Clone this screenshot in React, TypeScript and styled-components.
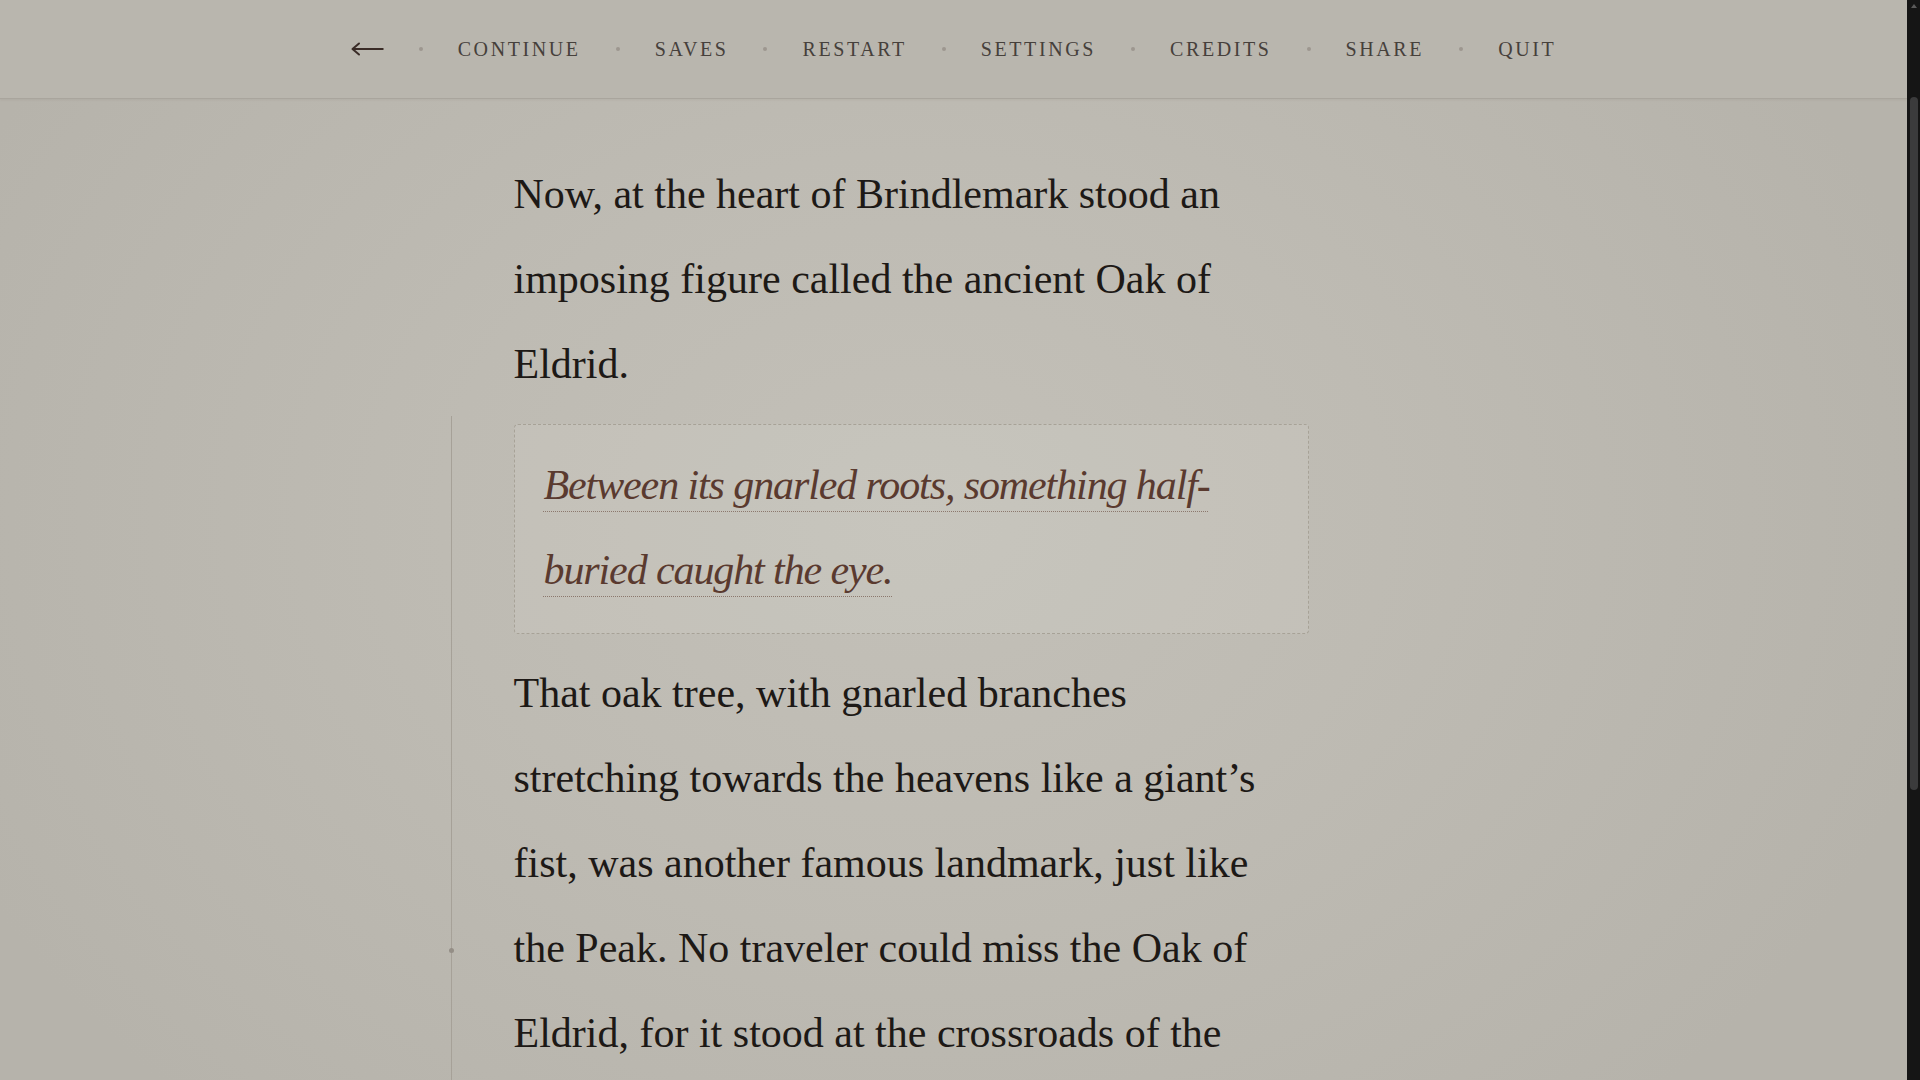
import React, { FunctionComponent } from 'react';
import styled, { createGlobalStyle } from 'styled-components';

const GlobalStyle = createGlobalStyle`
  html, body {
    margin: 0;
    padding: 0;
    height: 100%;
    overflow: hidden;
    background: #b9b6ae;
  }
  * {
    box-sizing: border-box;
  }
`;

const serif = `"Liberation Serif", "Times New Roman", serif`;

const Page = styled.div`
  display: flex;
  width: 100vw;
  height: 100vh;
  overflow: hidden;
`;

const Main = styled.main`
  flex: 1;
  display: grid;
  grid-template-columns: 1fr 880px 1fr;
  grid-template-rows: 99px 1fr;
  overflow: hidden;
  background: radial-gradient(
    ellipse 55% 75% at 48% 48%,
    #c3c0b8 0%,
    #bebbb3 45%,
    #b6b3ab 100%
  );
`;

const NavBar = styled.nav`
  grid-column: 1 / -1;
  display: flex;
  align-items: center;
  justify-content: center;
  gap: 35px;
  height: 99px;
  background: #b9b6ae;
  border-bottom: 1px solid #a9a59d;
  box-shadow: 0 1px 2px rgba(90, 80, 70, 0.08);
`;

const BackButton = styled.button`
  display: flex;
  align-items: center;
  background: none;
  border: none;
  padding: 0;
  cursor: pointer;
  color: #3a2c27;
`;

const NavDot = styled.span`
  width: 4px;
  height: 4px;
  border-radius: 50%;
  background: #9d978f;
`;

const NavItem = styled.a`
  font-family: ${serif};
  font-size: 20px;
  letter-spacing: 2.6px;
  text-transform: uppercase;
  color: #46403b;
  text-decoration: none;
  cursor: pointer;
  line-height: 1;
`;

const Gutter = styled.div`
  grid-column: 1;
  grid-row: 2;
  display: flex;
  justify-content: flex-end;
  padding-right: 62px;
  padding-top: 317px;
`;

const Rail = styled.div`
  width: 1px;
  height: 100%;
  background: #a6a198;
  display: flex;
  flex-direction: column;
  align-items: center;
`;

const RailDot = styled.span<{ offset: number }>`
  flex: none;
  width: 5px;
  height: 5px;
  border-radius: 50%;
  background: #948e86;
  margin-top: ${({ offset }) => offset}px;
`;

const Story = styled.article`
  grid-column: 2;
  grid-row: 2;
  padding-top: 53px;
  display: flex;
  flex-direction: column;
  gap: 17px;
`;

const Paragraph = styled.p`
  margin: 0;
  max-width: 770px;
  font-family: ${serif};
  font-size: 42px;
  line-height: 85px;
  color: #1d1916;
`;

const ChoiceBox = styled.div`
  width: 795px;
  padding: 18px 28px 20px 29px;
  border: 1px dashed #a7a297;
  border-radius: 4px;
  background: rgba(255, 255, 255, 0.08);
`;

const ChoiceText = styled.a`
  font-family: ${serif};
  font-style: italic;
  font-size: 42px;
  line-height: 85px;
  letter-spacing: -1.1px;
  color: #5a3a2f;
  text-decoration: underline dotted #8c786d;
  text-decoration-thickness: 1px;
  text-underline-offset: 12px;
  cursor: pointer;
`;

const ScrollRail = styled.div`
  flex: none;
  width: 13px;
  height: 100%;
  background: #151515;
  display: flex;
  flex-direction: column;
  align-items: center;
`;

const ScrollArrow = styled.span`
  margin-top: 4px;
  width: 0;
  height: 0;
  border-left: 3px solid transparent;
  border-right: 3px solid transparent;
  border-bottom: 4px solid #5a5a5a;
`;

const ScrollThumb = styled.div`
  margin-top: 89px;
  width: 8px;
  height: 693px;
  border-radius: 4px;
  background: #3b3b3c;
`;

const BackArrow: FunctionComponent = () => (
  <svg width="33" height="14" viewBox="0 0 33 14" fill="none">
    <path d="M1.5 7H32.5" stroke="currentColor" strokeWidth="2" />
    <path
      d="M8 1.5L1.5 7L8 12.5"
      stroke="currentColor"
      strokeWidth="2"
      strokeLinecap="round"
      strokeLinejoin="round"
    />
  </svg>
);

const menu = ['Continue', 'Saves', 'Restart', 'Settings', 'Credits', 'Share', 'Quit'];

const App: FunctionComponent = () => (
  <>
    <GlobalStyle />
    <Page>
      <Main>
        <NavBar>
          <BackButton type="button" aria-label="Back">
            <BackArrow />
          </BackButton>
          {menu.map((label) => (
            <React.Fragment key={label}>
              <NavDot />
              <NavItem>{label}</NavItem>
            </React.Fragment>
          ))}
        </NavBar>

        <Gutter>
          <Rail>
            <RailDot offset={532} />
          </Rail>
        </Gutter>

        <Story>
          <Paragraph>
            Now, at the heart of Brindlemark stood an imposing figure called the
            ancient Oak of Eldrid.
          </Paragraph>
          <ChoiceBox>
            <ChoiceText>
              Between its gnarled roots, something half-buried caught the eye.
            </ChoiceText>
          </ChoiceBox>
          <Paragraph>
            That oak tree, with gnarled branches stretching towards the heavens
            like a giant’s fist, was another famous landmark, just like the Peak.
            No traveler could miss the Oak of Eldrid, for it stood at the
            crossroads of the
          </Paragraph>
        </Story>
      </Main>
      <ScrollRail>
        <ScrollArrow />
        <ScrollThumb />
      </ScrollRail>
    </Page>
  </>
);

export default App;
